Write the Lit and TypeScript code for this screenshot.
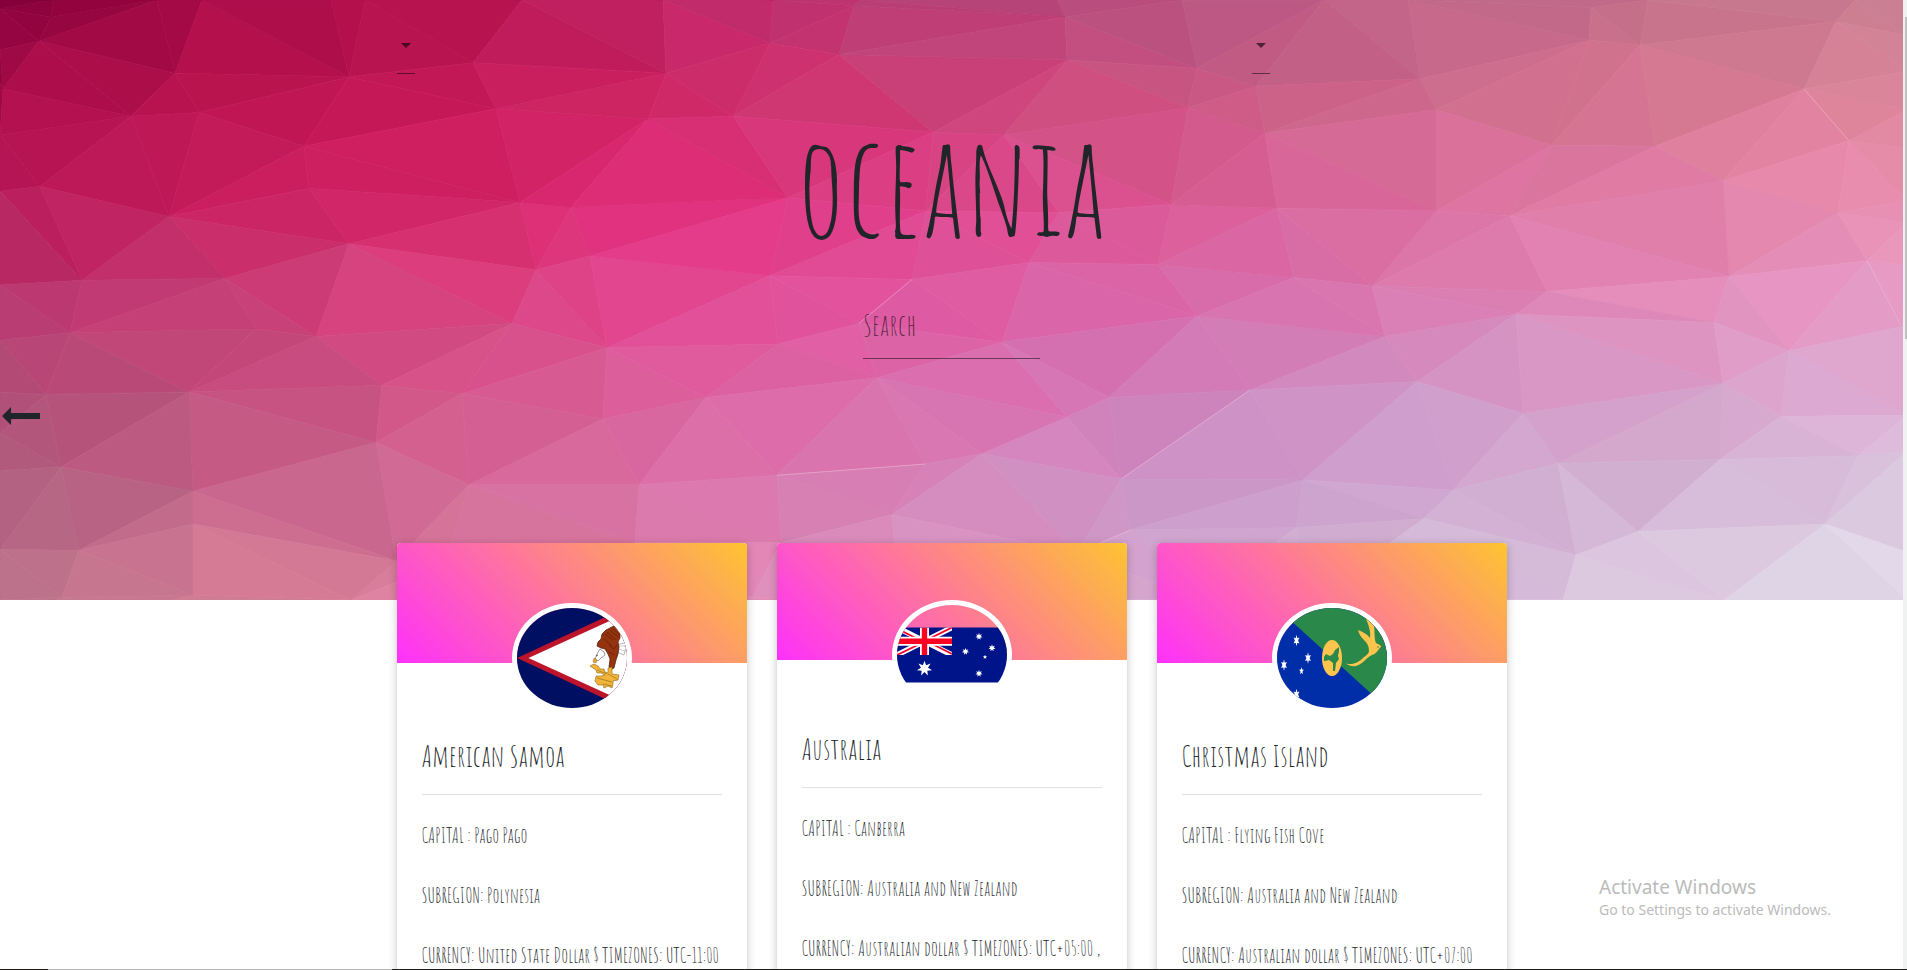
import { LitElement, html, svg, css } from "lit";
import { customElement, property } from "lit/decorators.js";

type Point = [number, number];

const MESH_WIDTH = 1907;
const MESH_HEIGHT = 640;

/* The mesh is stretched sideways, so neighbours are found in a space with taller rows. */
const MESH_ASPECT = 1.8;

const MESH_POINTS: Point[] = [
  [-60, -40], [1970, -40], [-60, 700], [1970, 700],
  [0, 0], [51, 18], [0, 9], [54, 0], [39, 44], [0, 53], [3, 95], [175, 78], [202, 0], [157, 0], [349, 82],
  [331, 0], [365, 0], [473, 67], [522, 0], [131, 124], [199, 120], [0, 144], [304, 156], [496, 116],
  [40, 199], [0, 204], [169, 231], [309, 201], [349, 260], [520, 216], [571, 221], [536, 288], [0, 304],
  [82, 299], [225, 297], [70, 355], [0, 363], [256, 351], [316, 359], [512, 345], [590, 273], [607, 371],
  [46, 421], [189, 418], [382, 411], [462, 420], [376, 472], [603, 447], [0, 418], [0, 462], [61, 498],
  [0, 502], [193, 524], [193, 559], [469, 517], [79, 587], [0, 586], [396, 598], [445, 600], [62, 637],
  [193, 635], [351, 640], [639, 517], [0, 640], [663, 0], [666, 78], [773, 0], [770, 46], [854, 6],
  [839, 58], [733, 124], [648, 127], [933, 141], [788, 211], [1057, 0], [1065, 18], [1067, 64],
  [1197, 73], [1182, 0], [1188, 115], [1004, 144], [926, 225], [1059, 227], [1171, 218], [770, 294],
  [912, 298], [1029, 280], [1158, 282], [859, 345], [778, 367], [1002, 365], [1197, 337], [877, 403],
  [706, 424], [1067, 445], [1109, 424], [925, 495], [777, 507], [982, 484], [1250, 416], [1121, 511],
  [892, 549], [1077, 590], [1131, 565], [781, 579], [752, 637], [635, 579], [635, 640], [860, 0],
  [1324, 0], [1408, 0], [1420, 84], [1256, 92], [1591, 8], [1589, 43], [1640, 48], [1648, 0], [1836, 23],
  [1855, 0], [1436, 117], [1265, 142], [1552, 155], [1655, 156], [1804, 95], [1849, 150], [1723, 193],
  [1436, 225], [1510, 230], [1277, 222], [1838, 227], [1867, 278], [1294, 296], [1372, 305], [1547, 311],
  [1729, 295], [1714, 344], [1516, 335], [1385, 359], [1789, 374], [1907, 347], [1417, 407], [1523, 441],
  [1723, 409], [1781, 444], [1907, 443], [1720, 490], [1858, 486], [1558, 494], [1453, 523], [1303, 512],
  [1296, 563], [1424, 553], [1638, 567], [1825, 559], [1576, 592], [1907, 589], [1724, 640], [1563, 640],
  [1907, 0], [1907, 38], [1907, 76], [1907, 117], [1907, 158], [1907, 214], [1907, 237], [1907, 283],
  [1907, 481], [1907, 640], [1070, 640], [1310, 640], [1200, 640], [900, 640],
];

/* Palette on an even grid: one row per sixth of the height, one column per eighth of the width. */
const PALETTE = [
  ["84003a", "a80a46", "b4124e", "c0286a", "b54075", "b75482", "be6488", "c4708a", "c98292"],
  ["ae0e4c", "bd1551", "c91b5a", "d32c6b", "cf427b", "cb5883", "cf6c8e", "d87892", "df889d"],
  ["b71858", "ca1f60", "d72468", "e33080", "e0458b", "da5a94", "db70a0", "e17da8", "ec92b3"],
  ["b83770", "c63e75", "dc4482", "e34995", "e05ba4", "d96cae", "db7cb2", "e38cba", "e79dc8"],
  ["b05078", "c3507f", "d5588c", "db66a4", "da70b0", "cf83bd", "cf98c8", "d6a0ca", "ddb0d6"],
  ["b0627f", "c46589", "d56c98", "da76ac", "d58abd", "ca99c9", "cfa9d1", "d3b6d6", "dccbe1"],
  ["bd758c", "da8299", "df86a2", "e48fb9", "dd9bc8", "d4aed4", "d8c0dc", "e2d2e5", "e6e3f0"],
].map((row) => row.map((hex) => [0, 2, 4].map((i) => parseInt(hex.slice(i, i + 2), 16))));

function colorAt(x: number, y: number, shade: number): string {
  const gx = Math.min(7.999, Math.max(0, (x / MESH_WIDTH) * 8));
  const gy = Math.min(5.999, Math.max(0, (y / MESH_HEIGHT) * 6));
  const cx = Math.floor(gx);
  const cy = Math.floor(gy);
  const fx = gx - cx;
  const fy = gy - cy;
  const channels = [0, 1, 2].map((k) => {
    const top = PALETTE[cy][cx][k] * (1 - fx) + PALETTE[cy][cx + 1][k] * fx;
    const bottom = PALETTE[cy + 1][cx][k] * (1 - fx) + PALETTE[cy + 1][cx + 1][k] * fx;
    return Math.round(Math.min(255, (top * (1 - fy) + bottom * fy) * shade));
  });
  return `rgb(${channels.join(",")})`;
}

function circumscribes(tri: number[], pts: Point[], p: Point): boolean {
  const [a, b, c] = tri.map((i) => [pts[i][0] - p[0], pts[i][1] - p[1]]);
  const sq = (v: number[]) => v[0] * v[0] + v[1] * v[1];
  const det =
    sq(a) * (b[0] * c[1] - c[0] * b[1]) -
    sq(b) * (a[0] * c[1] - c[0] * a[1]) +
    sq(c) * (a[0] * b[1] - b[0] * a[1]);
  const turn =
    (pts[tri[1]][0] - pts[tri[0]][0]) * (pts[tri[2]][1] - pts[tri[0]][1]) -
    (pts[tri[1]][1] - pts[tri[0]][1]) * (pts[tri[2]][0] - pts[tri[0]][0]);
  return turn > 0 ? det > 0 : det < 0;
}

/* Incremental Delaunay triangulation. */
function triangulate(source: Point[]): number[][] {
  const n = source.length;
  const pts: Point[] = [...source, [-20000, -9000], [20000, -9000], [900, 30000]];
  let tris: number[][] = [[n, n + 1, n + 2]];
  for (let i = 0; i < n; i++) {
    const edges = new Map<string, [number, number]>();
    const kept: number[][] = [];
    for (const tri of tris) {
      if (!circumscribes(tri, pts, pts[i])) {
        kept.push(tri);
        continue;
      }
      for (const [u, v] of [[tri[0], tri[1]], [tri[1], tri[2]], [tri[2], tri[0]]]) {
        const key = u < v ? `${u}-${v}` : `${v}-${u}`;
        if (edges.has(key)) edges.delete(key);
        else edges.set(key, [u, v]);
      }
    }
    tris = kept;
    edges.forEach(([u, v]) => tris.push([u, v, i]));
  }
  return tris.filter((tri) => tri.every((i) => i < n));
}

const FACETS = triangulate(MESH_POINTS.map(([x, y]) => [x, y * MESH_ASPECT] as Point)).map((tri) => {
  const corners = tri.map((i) => MESH_POINTS[i]);
  const x = (corners[0][0] + corners[1][0] + corners[2][0]) / 3;
  const y = (corners[0][1] + corners[1][1] + corners[2][1]) / 3;
  const shade = 1 + (((Math.round(x) * 7 + Math.round(y) * 13) % 11) - 5) * 0.002;
  return { points: corners.map((c) => c.join(",")).join(" "), fill: colorAt(x, y, shade) };
});

function star(cx: number, cy: number, rx: number, ry: number, tips: number): string {
  const out: string[] = [];
  for (let i = 0; i < tips * 2; i++) {
    const r = i % 2 ? 0.46 : 1;
    const a = (Math.PI * i) / tips;
    out.push(`${(cx + Math.sin(a) * rx * r).toFixed(1)},${(cy - Math.cos(a) * ry * r).toFixed(1)}`);
  }
  return out.join(" ");
}

const samoaFlag = svg`
  <rect width="110" height="100" fill="#000f61"/>
  <path d="M0 50 110 -1V101Z" fill="#bc152b"/>
  <path d="M11.500 50 110 5V95Z" fill="#fff"/>
  <path d="M100 37l7-2 2 1-1 2 1 2-1 3-1 4-7-3z" fill="#fff" stroke="#888" stroke-width=".6"/>
  <path d="M101 38l7 0M101 41l7 2" stroke="#999" stroke-width=".5"/>
  <path d="M97 18l3 2 3 4 0 6-2 4 1 5-1 7-2 6-2 8-2 1-3-2 1-8-2-5-3-5-4-1-4-2 1-4 3-3 1-5 4-4z" fill="#96330f" stroke="#4a1504" stroke-width=".7"/>
  <path d="M88 26l8 6M90 24l9 8M93 22l8 7M95 20l7 6M87 31l8 7M92 37l5 4 3-4M92 44l5 3" stroke="#4f1a08" stroke-width=".6" fill="none"/>
  <path d="M83 41l4 3 1 3-4 3-3 3-3-2 2-5z" fill="#fff" stroke="#555" stroke-width=".6"/>
  <path d="M79 48l2-1" stroke="#333" stroke-width=".8"/>
  <path d="M77 50l3 2-1 3-3-1z" fill="#e9a532" stroke="#7a5210" stroke-width=".4"/>
  <path d="M73 58l4-2 4 2 2 3 4 0 1 3 3 1 0-5 4-1 0 7 7 1-1 5-5 1 0 3-1 4-4-2-4 2-1-3-5 0-3-4 1-5 5 0 4-1-4-2-4 0-1-3z" fill="#f2b53a" stroke="#8c641b" stroke-width=".6"/>
  <path d="M80 70l15 4M86 76l9 2M91 66l9 5M80 62l10 4" stroke="#9a6f20" stroke-width=".7"/>`;

const australiaFlag = svg`
  <g transform="translate(0 22.500)">
    <rect width="110" height="55" fill="#00148a"/>
    <clipPath id="canton"><rect width="55" height="27.500"/></clipPath>
    <g clip-path="url(#canton)">
      <path d="M0 0 55 27.500M55 0 0 27.500" stroke="#fff" stroke-width="5.500"/>
      <path d="M0 1 27 14.800M55 26.500 28 12.800M55 0 28 13.200M0 27.500 27 14.500" stroke="#f8002d" stroke-width="1.800"/>
      <path d="M27.500 0V27.500M0 13.750H55" stroke="#fff" stroke-width="9"/>
      <path d="M27.500 0V27.500M0 13.750H55" stroke="#ff0022" stroke-width="5.400"/>
    </g>
    <g fill="#fff">
      <polygon points=${star(27.5, 41, 7.8, 7.8, 7)}/>
      <polygon points=${star(82, 9, 3.7, 3.7, 7)}/>
      <polygon points=${star(95, 20.5, 3.7, 3.7, 7)}/>
      <polygon points=${star(68.5, 24, 3.7, 3.7, 7)}/>
      <polygon points=${star(82, 46, 3.7, 3.7, 7)}/>
      <polygon points=${star(88, 29.5, 2.2, 2.2, 5)}/>
    </g>
  </g>`;

const christmasFlag = svg`
  <rect width="110" height="100" fill="#002da8"/>
  <path d="M0 0H110V100Z" fill="#29884a"/>
  <g fill="#fff">
    <polygon points=${star(19.5, 32.5, 3.4, 5.8, 6)}/>
    <polygon points=${star(31, 50, 3.4, 5.8, 6)}/>
    <polygon points=${star(7, 57, 3.4, 5.8, 6)}/>
    <polygon points=${star(24.5, 63, 2.4, 4, 5)}/>
    <polygon points=${star(19.5, 86.5, 3.4, 5.8, 6)}/>
  </g>
  <ellipse cx="55" cy="50" rx="10" ry="18" fill="#ffc44c"/>
  <path d="M47 53l0-4 2-3 4 2 3-2 2-4 4-3 0 4-1 5 1 3-3 4-1 8-2 0 0-8-4-3-4 1z" fill="#29884a"/>
  <path d="M89 11C92 13 95 15 97 18C98 24 97 31 99 35C101 37 104 36 104 39C101 41 101 45 95 47C90 49 86 56 79 58C75 59 71 57 69 55.500C76 57.500 82 54 86 50C88 48 92 46 92 43C92 38 90 35 87 32C84 29 82 26 81 22C86 24 90 26 93 30C94 24 92 18 89 11Z" fill="#ffc44c"/>
  <circle cx="101" cy="39" r=".8" fill="#29884a"/>`;

interface Country {
  name: string;
  capital: string;
  subregion: string;
  currency: string;
  timezones: string;
  flag: unknown;
  compact?: boolean;
}

const COUNTRIES: Country[] = [
  { name: "American Samoa", capital: "Pago Pago", subregion: "Polynesia", currency: "United State Dollar $", timezones: "UTC-11:00", flag: samoaFlag },
  { name: "Australia", capital: "Canberra", subregion: "Australia and New Zealand", currency: "Australian dollar $", timezones: "UTC+05:00 ,", flag: australiaFlag, compact: true },
  { name: "Christmas Island", capital: "Flying Fish Cove", subregion: "Australia and New Zealand", currency: "Australian dollar $", timezones: "UTC+07:00", flag: christmasFlag },
];

@customElement("country-card")
export class CountryCard extends LitElement {
  @property({ attribute: false }) country!: Country;

  static styles = css`
    :host {
      display: block;
      min-width: 0;
    }
    .card {
      height: 100%;
      min-height: 480px;
      background: #fff;
      border-radius: 4px;
      box-shadow: 0 2px 8px rgba(0, 0, 0, 0.24);
    }
    .banner {
      height: 120px;
      border-radius: 4px 4px 0 0;
      background: linear-gradient(45deg, #ff30fb, #fdc431);
    }
    .avatar {
      box-sizing: border-box;
      width: 120px;
      height: 110px;
      margin: -60px auto 0;
      border: 5px solid #fff;
      border-radius: 50%;
      overflow: hidden;
    }
    .avatar svg {
      display: block;
      width: 100%;
      height: 100%;
    }
    .body {
      padding: 23px 25px;
    }
    .compact .banner {
      height: 117px;
    }
    .compact .body {
      padding-top: 19px;
    }
    h2 {
      margin: 0 0 18px;
      font-size: 30px;
      font-weight: 400;
      line-height: 40px;
    }
    hr {
      margin: 0 0 26px;
      border: 0;
      border-top: 1px solid rgba(0, 0, 0, 0.12);
    }
    p {
      margin: 0 0 30px;
      font-size: 20px;
      line-height: 30px;
    }
  `;

  render() {
    const c = this.country;
    return html`
      <article class="card ${c.compact ? "compact" : ""}">
        <div class="banner"></div>
        <div class="avatar">
          <svg viewBox="0 0 110 100" role="img" aria-label=${c.name}>${c.flag}</svg>
        </div>
        <div class="body">
          <h2>${c.name}</h2>
          <hr />
          <p>CAPITAL : ${c.capital}</p>
          <p>SUBREGION: ${c.subregion}</p>
          <p>CURRENCY: ${c.currency} TIMEZONES: ${c.timezones}</p>
        </div>
      </article>
    `;
  }
}

@customElement("app-root")
export class AppRoot extends LitElement {
  static styles = css`
    :host {
      display: flex;
      position: relative;
      height: 100vh;
      overflow: hidden;
      background: #fff;
      color: #212529;
      font-family: "Amatic SC", "Open Sans Condensed Light", "Liberation Sans", sans-serif;
    }
    main {
      flex: 1;
      min-width: 0;
    }
    .scrollbar {
      flex: 0 0 4px;
      box-sizing: border-box;
      padding: 17px 0 0 2px;
      background: #f0f2f2;
    }
    .thumb {
      height: 322px;
      background: #c1c1c1;
    }
    .hero {
      position: relative;
      box-sizing: border-box;
      height: 600px;
      padding-top: 36px;
    }
    .mesh {
      position: absolute;
      inset: 0;
      width: 100%;
      height: 100%;
    }
    .container {
      position: relative;
      box-sizing: border-box;
      width: 100%;
      max-width: 1110px;
      margin: 0 auto;
    }
    .filters {
      display: grid;
      grid-template-columns: repeat(4, 1fr);
      gap: 30px;
    }
    .filters .last {
      grid-column: 4;
    }
    .filter {
      position: relative;
      display: flex;
      width: 18px;
      height: 37px;
      border-bottom: 1px solid rgba(0, 0, 0, 0.5);
    }
    .filter select {
      width: 100%;
      padding: 0;
      border: 0;
      background: none;
      appearance: none;
      font: inherit;
    }
    .filter svg {
      position: absolute;
      left: 4px;
      top: 7px;
      width: 10px;
      height: 5px;
      pointer-events: none;
    }
    h1 {
      margin: 49px 0 58px;
      font-size: 140px;
      font-weight: 400;
      line-height: 120px;
      text-align: center;
    }
    .search {
      display: block;
      box-sizing: border-box;
      width: 177px;
      height: 58px;
      margin: 0 auto;
      padding: 0 0 10px;
      border: 0;
      border-bottom: 1px solid rgba(0, 0, 0, 0.5);
      border-radius: 0;
      outline: 0;
      background: none;
      color: inherit;
      font: inherit;
      font-size: 30px;
    }
    .search::placeholder {
      color: rgba(0, 0, 0, 0.6);
      opacity: 1;
    }
    .back {
      position: absolute;
      left: 2px;
      top: 407px;
      width: 38px;
      height: 18px;
      padding: 0;
      border: 0;
      background: none;
      color: inherit;
    }
    .back svg {
      display: block;
    }
    .cards {
      display: grid;
      grid-template-columns: repeat(3, 1fr);
      gap: 30px;
      margin-top: -57px;
    }
    .watermark {
      position: absolute;
      right: 71px;
      bottom: 50px;
      width: 237px;
      color: #bbb;
      font-family: "Noto Sans", "Open Sans", sans-serif;
    }
    .watermark p {
      margin: 0;
      font-size: 14px;
      line-height: 20px;
      white-space: nowrap;
    }
    .watermark .headline {
      font-size: 19px;
      line-height: 26px;
    }
    .edge {
      position: absolute;
      inset: auto 0 0;
      height: 1px;
      background: linear-gradient(90deg, #2a1518 48px, #bbb 48px 392px, #1c1c1a 392px);
    }
  `;

  private filter(label: string, last = false) {
    return html`
      <div class="filter ${last ? "last" : ""}">
        <select aria-label=${label}></select>
        <svg viewBox="0 0 10 5" aria-hidden="true"><path d="M0 0H10L5 5Z" fill="rgba(0,0,0,.6)" /></svg>
      </div>
    `;
  }

  render() {
    return html`
      <main>
        <section class="hero">
          <svg class="mesh" viewBox="0 0 1903 640" preserveAspectRatio="none" aria-hidden="true">
            ${FACETS.map((f) => svg`<polygon points=${f.points} fill=${f.fill} stroke=${f.fill} stroke-width=".7"/>`)}
            <path
              d="M912 298 859 345M777 507 925 495M1121 511 1250 416M1100 579 1131 565M1804 95 1849 150M1867 278 1901 347"
              fill="none" stroke="#f6c3d8" stroke-opacity=".45" stroke-width="1"
            />
          </svg>
          <div class="container">
            <div class="filters">${this.filter("Subregion")}${this.filter("Sort", true)}</div>
            <h1>oceania</h1>
            <input class="search" type="text" placeholder="Search" aria-label="Search" />
          </div>
          <button class="back" aria-label="Back">
            <svg width="38" height="18" viewBox="0 0 38 18"><path d="M0 9 9 0V6H38V12H9V18Z" fill="currentColor" /></svg>
          </button>
        </section>
        <div class="container cards">
          ${COUNTRIES.map((c) => html`<country-card .country=${c}></country-card>`)}
        </div>
      </main>
      <div class="scrollbar" aria-hidden="true"><div class="thumb"></div></div>
      <aside class="watermark">
        <p class="headline">Activate Windows</p>
        <p>Go to Settings to activate Windows.</p>
      </aside>
      <div class="edge"></div>
    `;
  }
}
